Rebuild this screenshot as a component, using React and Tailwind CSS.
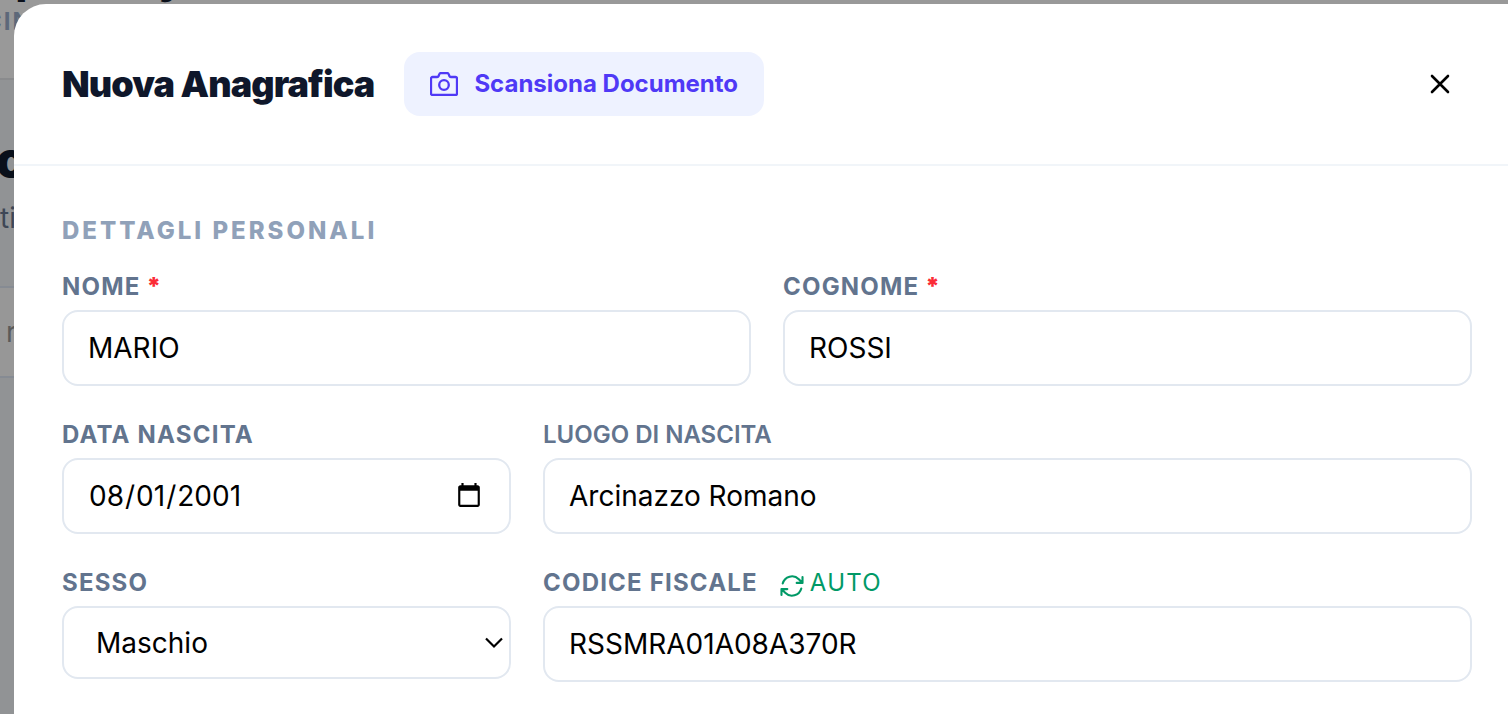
import { HiOutlineArrowPath } from 'react-icons/hi2';

const labelBase = 'block text-2xl/[34px] text-slate-500';
const labelBold = 'font-bold tracking-wider';
const fieldBase =
  'block w-full rounded-2xl border-2 border-slate-200 bg-white text-[28px] text-black outline-none focus:border-indigo-300';

function CameraIcon() {
  return (
    <svg width="28" height="24" viewBox="0 0 28 24" fill="none" stroke="currentColor" strokeWidth="2.300" strokeLinejoin="round" aria-hidden="true">
      <path d="M2.500 5H7.200a1.500 1.500 0 0 0 1.400-1L9.300 2.200A1.800 1.800 0 0 1 11 1h6a1.800 1.800 0 0 1 1.700 1.200L19.400 4a1.500 1.500 0 0 0 1.400 1H25.500A1.500 1.500 0 0 1 27 6.500v15a1.500 1.500 0 0 1-1.500 1.500h-23A1.500 1.500 0 0 1 1 21.500v-15A1.500 1.500 0 0 1 2.500 5Z" />
      <circle cx="14" cy="13" r="4.800" />
    </svg>
  );
}

function CloseIcon() {
  return (
    <svg width="24" height="24" viewBox="0 0 24 24" fill="none" stroke="currentColor" strokeWidth="2.600" strokeLinecap="round" aria-hidden="true">
      <path d="M4 4l16 16M20 4L4 20" />
    </svg>
  );
}

function TextField({ id, label, value, required, labelClass = labelBold, children }) {
  return (
    <div>
      <div className="mb-[6px] flex items-center">
        <label htmlFor={id} className={`${labelBase} ${labelClass}`}>
          {label}
          {required && <span className="font-black text-red-500"> *</span>}
        </label>
        {children}
      </div>
      <input id={id} type="text" defaultValue={value} className={`${fieldBase} h-19 px-6`} />
    </div>
  );
}

// Dimmed page left visible behind the modal
function Backdrop() {
  return (
    <div className="absolute inset-0 overflow-hidden bg-[#919395]" aria-hidden="true">
      <div className="h-20 overflow-hidden border-b-2 border-[#8a8b8d] bg-[#999999]">
        <p className="-mt-[38px] flex gap-30 pl-4 text-4xl/10 font-black text-[#090f1a]">
          <span>p</span>
          <span>y</span>
        </p>
        <p className="-ml-4 mt-1 text-2xl/8 font-bold tracking-[2px] text-[#5d6879]">CIN</p>
      </div>
      <p className="-ml-1 mt-14 text-5xl/[48px] font-black text-[#090f1a]">c</p>
      <p className="mt-[18px] text-[28px]/8 text-[#3e4756]">ti</p>
      <div className="mt-[52px] flex h-23 items-center border-y-2 border-[#868b93] bg-[#979797] pl-[6px]">
        <p className="text-[28px]/8 text-[#5a5a5a]">r</p>
      </div>
    </div>
  );
}

export default function App() {
  return (
    <div className="relative min-h-screen overflow-hidden font-[Inter,sans-serif]">
      <Backdrop />
      <div className="relative pl-[14px] pt-1">
        <section role="dialog" aria-labelledby="modal-title" className="min-h-[calc(100vh-4px)] rounded-tl-[32px] bg-white">
          <header className="flex items-center justify-between border-b-2 border-slate-100 px-12 py-12">
            <div className="flex items-center gap-[30px]">
              <h2 id="modal-title" className="text-4xl font-black tracking-tight text-slate-900">Nuova Anagrafica</h2>
              <button type="button" className="flex h-16 items-center gap-4 rounded-2xl bg-indigo-50 px-[26px] text-2xl font-bold text-indigo-600">
                <CameraIcon />
                Scansiona Documento
              </button>
            </div>
            <button type="button" aria-label="Chiudi" className="p-2 text-black">
              <CloseIcon />
            </button>
          </header>

          <form className="py-12 pl-12 pr-9">
            <h3 className="mb-[22px] text-2xl/[34px] font-extrabold tracking-[3px] text-slate-400">DETTAGLI PERSONALI</h3>
            <div className="grid grid-cols-2 gap-8">
              <TextField id="nome" label="NOME" value="MARIO" required />
              <TextField id="cognome" label="COGNOME" value="ROSSI" required />
            </div>
            <div className="mt-8 grid grid-cols-[minmax(0,449fr)_minmax(0,929fr)] gap-8">
              <div>
                <label htmlFor="data" className={`${labelBase} ${labelBold} mb-[6px]`}>DATA NASCITA</label>
                <input id="data" type="date" defaultValue="2001-08-01" className={`${fieldBase} h-19 px-6`} />
              </div>
              <TextField id="luogo" label="LUOGO DI NASCITA" value="Arcinazzo Romano" labelClass="font-semibold" />
              <div>
                <label htmlFor="sesso" className={`${labelBase} ${labelBold} mb-[6px]`}>SESSO</label>
                <div className="relative">
                  <select id="sesso" defaultValue="M" className={`${fieldBase} h-[73px] appearance-none px-8`}>
                    <option value="M">Maschio</option>
                    <option value="F">Femmina</option>
                  </select>
                  <svg className="pointer-events-none absolute inset-y-0 right-2 my-auto" width="18" height="12" viewBox="0 0 18 12" fill="none" stroke="currentColor" strokeWidth="2.200" aria-hidden="true">
                    <path d="M1 1.500l8 8 8-8" />
                  </svg>
                </div>
              </div>
              <TextField id="cf" label="CODICE FISCALE" value="RSSMRA01A08A370R">
                <button type="button" className="ml-5 flex items-end gap-1 text-2xl/[34px] tracking-wider text-emerald-600">
                  <HiOutlineArrowPath size={28} strokeWidth={1.8} />
                  AUTO
                </button>
              </TextField>
            </div>
          </form>
        </section>
      </div>
    </div>
  );
}
